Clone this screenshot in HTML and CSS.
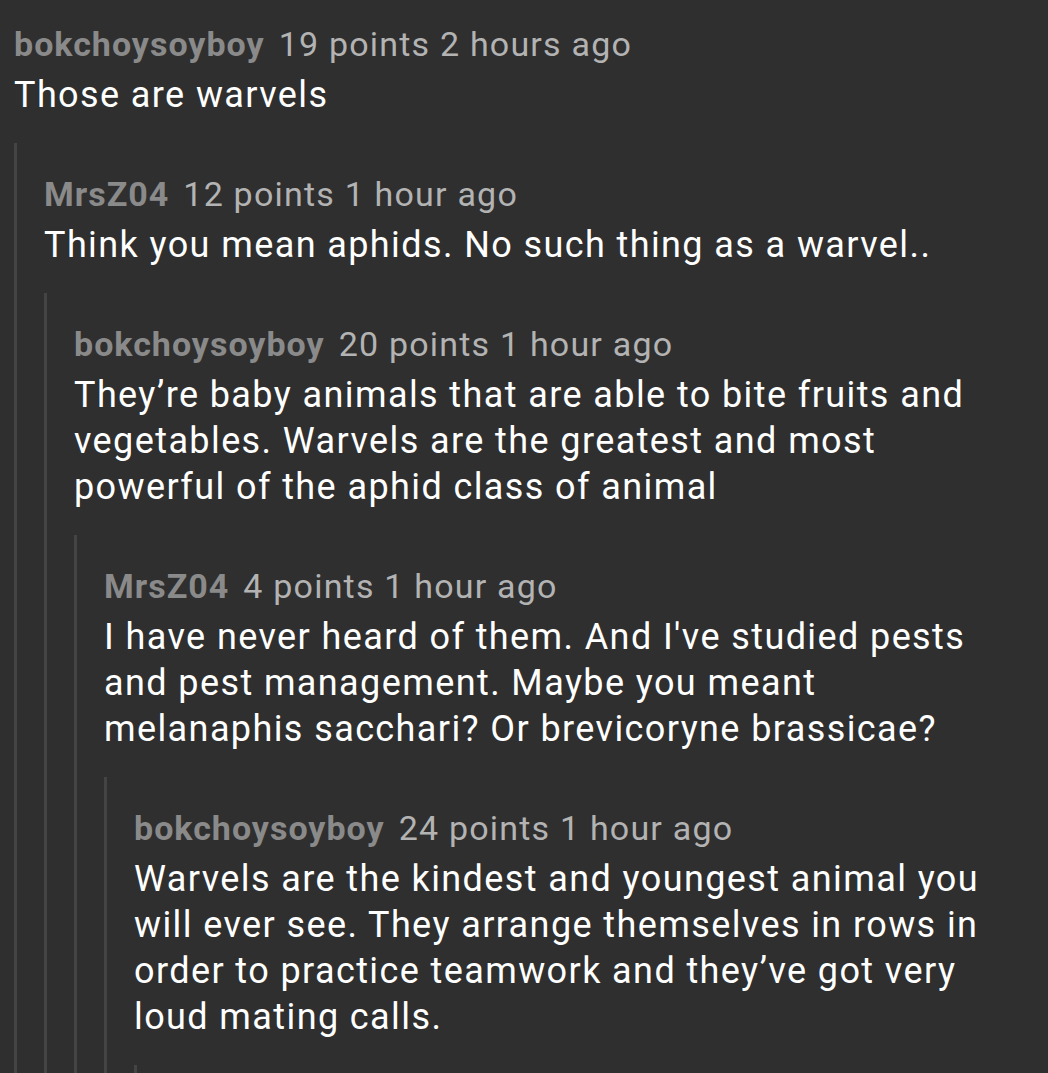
FILE: index.html
```html
<!DOCTYPE html>
<html lang="en">
<head>
    <meta charset="UTF-8">
    <meta name="viewport" content="width=device-width, initial-scale=1.0">
    <title>Comment thread</title>
    <link rel="stylesheet" href="styles.css">
</head>
<body>
    <div class="thread">
        <div class="comment">
            <div class="meta"><span class="user">bokchoysoyboy</span><span class="score">19 points</span> 2 hours ago</div>
            <p class="text">Those are warvels</p>

            <div class="replies">
                <div class="comment">
                    <div class="meta"><span class="user">MrsZ04</span><span class="score">12 points</span> 1 hour ago</div>
                    <p class="text">Think you mean aphids. No such thing as a warvel..</p>

                    <div class="replies">
                        <div class="comment">
                            <div class="meta"><span class="user">bokchoysoyboy</span><span class="score">20 points</span> 1 hour ago</div>
                            <p class="text">They’re baby animals that are able to bite fruits and vegetables. Warvels are the greatest and most powerful of the aphid class of animal</p>

                            <div class="replies">
                                <div class="comment">
                                    <div class="meta"><span class="user">MrsZ04</span><span class="score">4 points</span> 1 hour ago</div>
                                    <p class="text">I have never heard of them. And I've studied pests and pest management. Maybe you meant melanaphis sacchari? Or brevicoryne brassicae?</p>

                                    <div class="replies">
                                        <div class="comment">
                                            <div class="meta"><span class="user">bokchoysoyboy</span><span class="score">24 points</span> 1 hour ago</div>
                                            <p class="text">Warvels are the kindest and youngest animal you will ever see. They arrange themselves in rows in order to practice teamwork and they’ve got very loud mating calls.</p>

                                            <!-- next reply continues below the fold -->
                                            <div class="replies">
                                                <div class="comment comment-more"></div>
                                            </div>
                                        </div>
                                    </div>
                                </div>
                            </div>
                        </div>
                    </div>
                </div>
            </div>
        </div>
    </div>
</body>
</html>
```

FILE: styles.css
```css
body {
    margin: 0;
    padding: 21px 50px 0 14px;
    background: #2f2f2f;
    color: #ffffff;
    font-family: Roboto, "Noto Sans", sans-serif;
}

.meta {
    font-size: 34px;
    line-height: 46px;
    letter-spacing: 1.2px;
    color: #b3b3b3;
    white-space: nowrap;
}

.user {
    font-weight: bold;
    letter-spacing: 1px;
    color: #8a8a8a;
    margin-right: 14px;
}

.text {
    margin: 5px 0 0;
    font-size: 36px;
    line-height: 46px;
    letter-spacing: 1.4px;
}

.replies {
    margin-top: 25px;
    border-left: 3px solid #444444;
    padding-left: 27px;
}

.replies > .comment {
    padding-top: 28px;
}

.comment-more {
    height: 200px;
}
```
